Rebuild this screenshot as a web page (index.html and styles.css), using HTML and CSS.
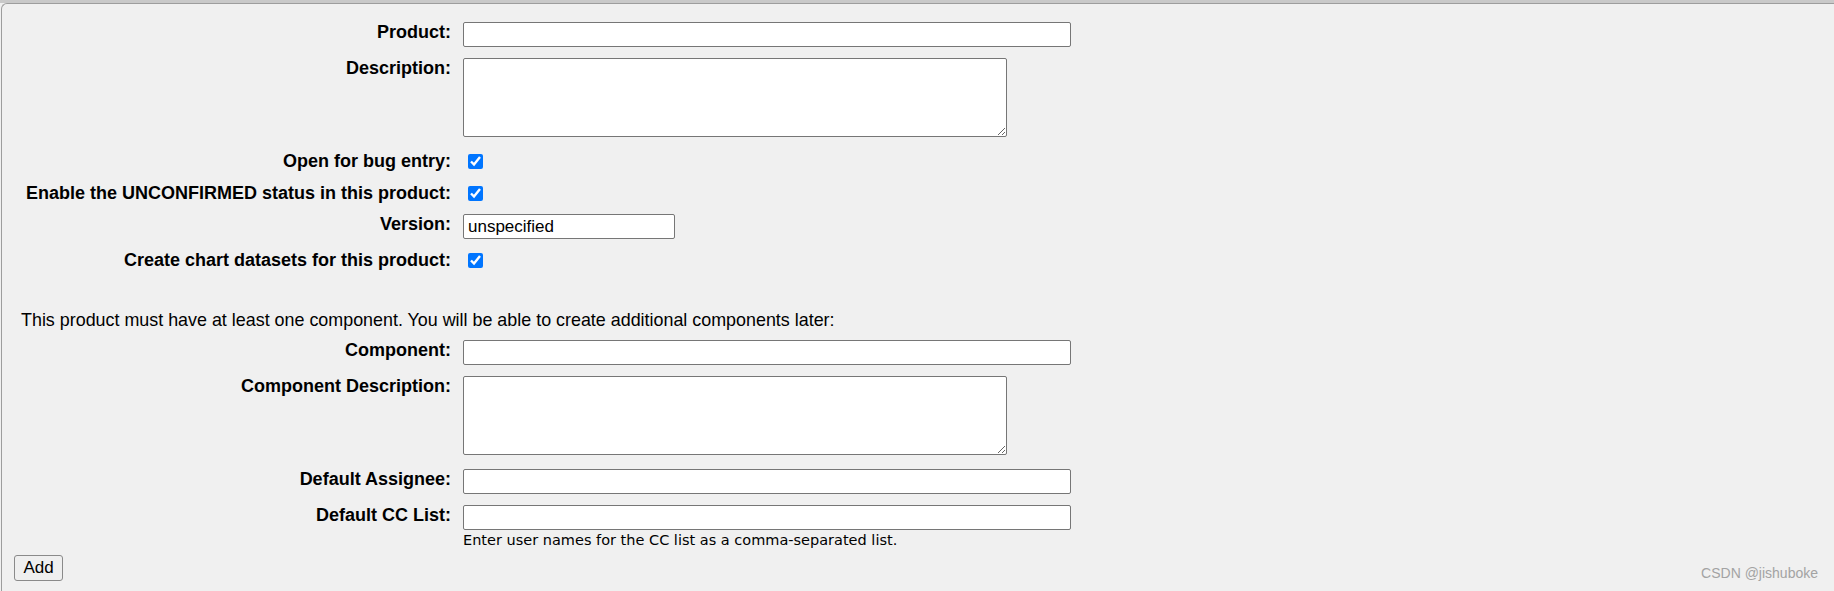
FILE: index.html
```html
<!DOCTYPE html>
<html lang="en">
<head>
<meta charset="utf-8">
<title>Add Product</title>
<link rel="stylesheet" href="styles.css">
</head>
<body>
<div class="page">
  <form class="frame">
    <div class="section">
      <div class="row">
        <label class="lbl" for="product">Product:</label>
        <input class="field field-wide" id="product" type="text">
      </div>
      <div class="row row-area">
        <label class="lbl" for="description">Description:</label>
        <textarea class="area" id="description"></textarea>
      </div>
      <div class="row row-check">
        <label class="lbl" for="open">Open for bug entry:</label>
        <input class="check" id="open" type="checkbox" checked>
      </div>
      <div class="row row-check row-tight">
        <label class="lbl" for="unconfirmed">Enable the UNCONFIRMED status in this product:</label>
        <input class="check" id="unconfirmed" type="checkbox" checked>
      </div>
      <div class="row">
        <label class="lbl" for="version">Version:</label>
        <input class="field field-short" id="version" type="text" value="unspecified">
      </div>
      <div class="row row-check row-last">
        <label class="lbl" for="chart">Create chart datasets for this product:</label>
        <input class="check" id="chart" type="checkbox" checked>
      </div>
    </div>

    <p class="note">This product must have at least one component. You will be able to create additional components later:</p>

    <div class="section">
      <div class="row">
        <label class="lbl" for="component">Component:</label>
        <input class="field field-wide" id="component" type="text">
      </div>
      <div class="row row-area">
        <label class="lbl" for="compdesc">Component Description:</label>
        <textarea class="area" id="compdesc"></textarea>
      </div>
      <div class="row">
        <label class="lbl" for="assignee">Default Assignee:</label>
        <input class="field field-wide" id="assignee" type="text">
      </div>
      <div class="row row-last">
        <label class="lbl" for="cc">Default CC List:</label>
        <div class="cell">
          <input class="field field-wide" id="cc" type="text">
          <div class="hint">Enter user names for the CC list as a comma-separated list.</div>
        </div>
      </div>
    </div>

    <button class="btn" type="button">Add</button>
  </form>
  <div class="watermark">CSDN @jishuboke</div>
</div>
</body>
</html>
```

FILE: styles.css
```css
html, body {
  margin: 0;
  padding: 0;
  height: 100%;
  overflow: hidden;
}

body {
  background: #f0f0f0;
  font-family: "Liberation Sans", Arial, sans-serif;
  color: #000;
}

.page {
  position: relative;
  height: 100%;
  box-sizing: border-box;
  border-top: 3px solid #c9c9c9;
  display: flex;
  flex-direction: column;
}

.frame {
  flex: 1;
  margin: 0 0 0 1px;
  border-top: 1px solid #9d9d9d;
  border-left: 1px solid #9d9d9d;
  border-top-left-radius: 6px;
  background: #f0f0f0;
  padding-top: 18px;
  display: flex;
  flex-direction: column;
  align-items: flex-start;
}

.section {
  display: flex;
  flex-direction: column;
}

.row {
  display: flex;
  align-items: flex-start;
  margin-bottom: 11px;
}

.row-tight {
  margin-bottom: 10px;
}

.row-last {
  margin-bottom: 0;
}

.lbl {
  width: 449px;
  flex: none;
  margin-right: 12px;
  text-align: right;
  font-weight: bold;
  font-size: 18px;
  line-height: 21px;
  white-space: nowrap;
}

.field {
  box-sizing: border-box;
  height: 25px;
  margin: 0;
  padding: 1px 4px;
  border: 1px solid #767676;
  border-radius: 2px;
  background: #fff;
  font-family: "Liberation Sans", Arial, sans-serif;
  font-size: 17px;
  color: #000;
  outline: none;
}

.field-wide {
  width: 608px;
}

.field-short {
  width: 212px;
}

.area {
  display: block;
  box-sizing: border-box;
  width: 544px;
  height: 79px;
  margin: 0 0 3px 0;
  padding: 2px;
  border: 1px solid #767676;
  border-radius: 2px;
  background: #fff;
  font-family: "Liberation Sans", Arial, sans-serif;
  font-size: 17px;
}

.check {
  width: 15px;
  height: 15px;
  margin: 3px 0 0 5px;
  accent-color: #0075ff;
}

.note {
  margin: 39px 0 9px 19px;
  font-size: 17.9px;
  line-height: 21px;
  white-space: nowrap;
}

.cell {
  display: flex;
  flex-direction: column;
}

.hint {
  margin-top: 2px;
  font-family: "DejaVu Sans", Verdana, sans-serif;
  font-size: 14.5px;
  line-height: 17px;
  white-space: nowrap;
}

.btn {
  box-sizing: border-box;
  margin: 6px 0 0 12px;
  width: 49px;
  height: 26px;
  padding: 0;
  border: 1px solid #8a8a8a;
  border-radius: 3px;
  background: #efefef;
  font-family: "Liberation Sans", Arial, sans-serif;
  font-size: 17px;
  color: #000;
}

.watermark {
  position: absolute;
  right: 16px;
  bottom: 10px;
  font-family: "Liberation Sans", Arial, sans-serif;
  font-size: 14px;
  line-height: 16px;
  color: #a3a3a3;
}
```
